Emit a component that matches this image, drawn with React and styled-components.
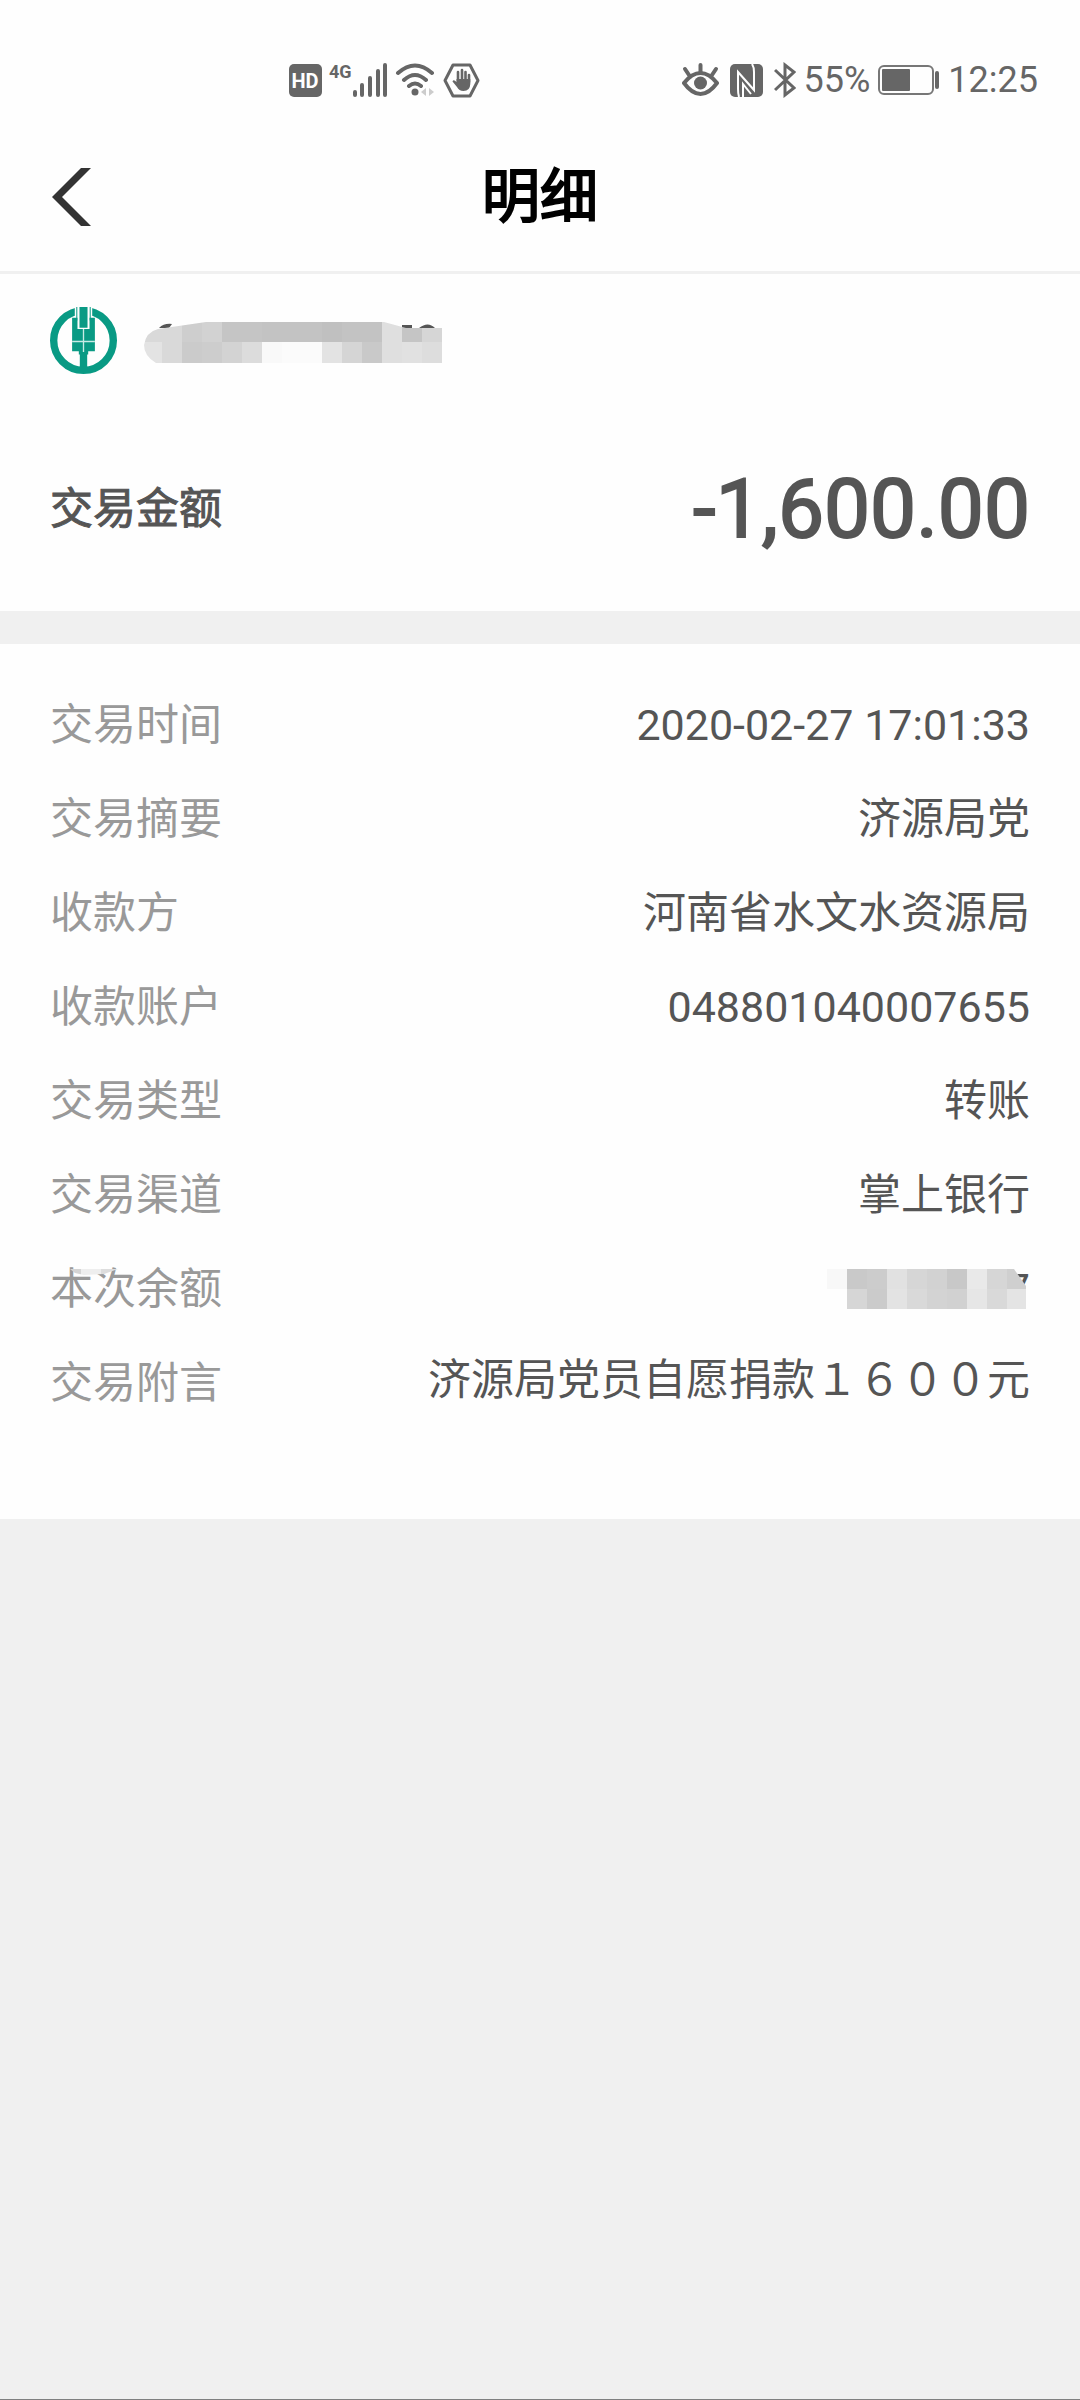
import React from "react";
import styled, { createGlobalStyle } from "styled-components";

const details = [
    { label: "交易时间", value: "2020-02-27 17:01:33" },
    { label: "交易摘要", value: "济源局党" },
    { label: "收款方", value: "河南省水文水资源局" },
    { label: "收款账户", value: "048801040007655" },
    { label: "交易类型", value: "转账" },
    { label: "交易渠道", value: "掌上银行" },
    { label: "本次余额", value: "7", masked: true },
    { label: "交易附言", value: "济源局党员自愿捐款１６００元", memo: true },
];

const accountTop = ["#d9d9d9", "#d9d9d9", "#cecece", "#d2d2d2", "#c5c5c5", "#c5c5c5", "#c3c3c3", "#c3c3c3", "#c3c3c3", "#c0c0c0", "#c3c3c3", "#c3c3c3", "#dfdfdf", "#c5c5c5", "#d6d6d6"];
const accountBottom = ["#e3e3e3", "#d9d9d9", "#cbcbcb", "#cdcdcd", "#d3d3d3", "#dcdcdc", "#f9f9f9", "#fbfbfb", "#fbfbfb", "#e3e3e3", "#d5d5d5", "#c9c9c9", "#dfdfdf", "#e1e1e1", "#dddddd"];

const balanceTop = ["#f8f8f8", "#c9c9c9", "#cccccc", "#e1e1e1", "#d6d6d6", "#d2d2d2", "#c8c8c8", "#e9e9e9", "#d6d6d6", "#cfcfcf"];
const balanceBottom = ["none", "#d6d6d6", "#cbcbcb", "#e3e3e3", "#d9d9d9", "#d3d3d3", "#d1d1d1", "#e6e6e6", "#d9d9d9", "#e4e4e4"];

const Tiles = ({ colors, x, y, height }) => (
    colors.map((color, i) => (
        <rect key={i} x={x + i * 20} y={y} width="20" height={height} fill={color} />
    ))
);

const StatusIcons = () => (
    <>
        <Group $gap="7px">
            <svg width="33" height="33" viewBox="0 0 33 33">
                <rect width="33" height="33" rx="5" fill="#666" />
                <text x="16" y="24" textAnchor="middle" fontSize="20" fontWeight="700" fill="#fff">HD</text>
            </svg>
            <Signal>
                <NetworkType>4G</NetworkType>
                <svg width="36" height="34" viewBox="0 0 36 34" stroke="#666" strokeWidth="4" strokeLinecap="round">
                    <path d="M3 29v3M10 22v10M18 15v17M26 8v24M33 2v30" />
                </svg>
            </Signal>
            <svg width="41" height="34" viewBox="0 0 41 34" fill="none" stroke="#666" strokeWidth="4" strokeLinecap="round">
                <path d="M3 10Q20 -5 37 10M9 17Q20 7 31 17M14 23Q20 18 26 23" />
                <circle cx="20" cy="29" r="3.5" fill="#666" stroke="none" />
                <path d="M31 25v8l-5-4zM34 25v8l5-4z" fill="#ccc" stroke="none" />
            </svg>
            <svg width="37" height="35" viewBox="0 0 37 35" fill="none">
                <path d="M10 2H27L35 17.500L27 33H10L2 17.500Z" stroke="#666" strokeWidth="3" strokeLinejoin="round" />
                <path d="M15 18V9M19 18V7M22.500 18V9M26 19V12" stroke="#666" strokeWidth="2.600" strokeLinecap="round" />
                <path d="M13.500 16H27.300V21Q27 28 20.500 28Q16 28 14 24L9.500 18.500Q10.500 16 13.500 19Z" fill="#666" />
            </svg>
        </Group>
        <Group $gap="8px">
            <Group $gap="11px">
                <svg width="37" height="34" viewBox="0 0 37 34" fill="none" stroke="#666" strokeWidth="4" strokeLinecap="round">
                    <path d="M2 20Q10 10 18.500 10T35 20Q27 31 18.500 31T2 20Z" strokeLinejoin="round" />
                    <path d="M18.500 2V9M3 6L7 12M34 6L30 12" />
                    <circle cx="18.500" cy="20" r="6.500" fill="#666" stroke="none" />
                </svg>
                <svg width="33" height="33" viewBox="0 0 33 33">
                    <rect width="33" height="33" rx="5" fill="#666" />
                    <path d="M9 33Q8 30 8 25V8L24 26V8Q24 3 22 0M13 33V20L21 30" fill="none" stroke="#fff" strokeWidth="2" />
                </svg>
                <svg width="22" height="36" viewBox="0 0 22 36" fill="none" stroke="#666" strokeWidth="3">
                    <path d="M1 8L20 26L11 33V3L20 10L1 28" />
                </svg>
            </Group>
            <StatusText>55%</StatusText>
            <svg width="62" height="30" viewBox="0 0 62 30">
                <rect x="1" y="1" width="54" height="28" rx="5" fill="none" stroke="#777" strokeWidth="2" />
                <rect x="4" y="4" width="28" height="22" rx="1" fill="#666" />
                <rect x="57" y="6" width="4" height="18" rx="2" fill="#666" />
            </svg>
            <StatusText>12:25</StatusText>
        </Group>
    </>
);

const BankLogo = () => (
    <svg width="67" height="67" viewBox="0 0 200 200" role="img" aria-label="中国农业银行">
        <circle cx="100" cy="100" r="89" fill="none" stroke="#099a84" strokeWidth="22" />
        <path d="M74 0H126V40H74Z" fill="#fefefe" />
        <path d="M66 32H82V66H118V32H134V132H114V142H86V132H66Z" fill="#099a84" />
        <path d="M88 0H112V62H88ZM89 140H111V190H89Z" fill="#099a84" />
        <path d="M80 0V40M120 0V40" stroke="#099a84" strokeWidth="3" />
        <path d="M66 103H134M100 66V134" stroke="#c8ebe5" strokeWidth="4" />
    </svg>
);

const AccountMask = () => (
    <svg width="300" height="46" viewBox="0 -4 300 46" role="img" aria-label="账号已隐藏">
        <clipPath id="accountShape">
            <path d="M0 23Q2 10 14 7L62 0H240L262 6H299V41H12Q0 34 0 23Z" />
        </clipPath>
        <path d="M15 6Q20 1 28 2L25 6ZM258 3h10v3h-10zM275 6Q284 -1 291 6Z" fill="#555" />
        <g clipPath="url(#accountShape)" shapeRendering="crispEdges">
            <Tiles colors={accountTop} x={-2} y={0} height={20} />
            <Tiles colors={accountBottom} x={-2} y={20} height={21} />
        </g>
    </svg>
);

const BalanceMask = () => (
    <MaskOverlay width="200" height="40" viewBox="0 0 200 40" role="img" aria-label="余额已隐藏">
        <clipPath id="balanceShape">
            <path d="M0 0H187L199 17V40H0Z" />
        </clipPath>
        <g clipPath="url(#balanceShape)" shapeRendering="crispEdges">
            <Tiles colors={balanceTop} x={0} y={0} height={20} />
            <Tiles colors={balanceBottom} x={0} y={20} height={20} />
        </g>
    </MaskOverlay>
);

const LabelSmudge = () => (
    <SmudgeOverlay width="48" height="6" viewBox="0 0 48 6" aria-hidden="true">
        <clipPath id="smudgeShape">
            <path d="M0 0H48L34 5L14 6L5 4Z" />
        </clipPath>
        <g clipPath="url(#smudgeShape)">
            <Tiles colors={["#d4d4d4", "#eeeeee", "#dddddd"]} x={-9} y={0} height={6} />
        </g>
    </SmudgeOverlay>
);

const App = () => {
    return (
        <>
            <GlobalStyle />
            <Page>
                <StatusBar>
                    <StatusIcons />
                </StatusBar>
                <Header>
                    <BackButton type="button" aria-label="返回">
                        <svg width="44" height="58" viewBox="0 0 44 58">
                            <path d="M31 0H41L12 29L41 58H31L2 29Z" fill="#333" />
                        </svg>
                    </BackButton>
                    <Title>明细</Title>
                </Header>
                <Summary>
                    <Account>
                        <BankLogo />
                        <AccountMask />
                    </Account>
                    <AmountRow>
                        <AmountLabel>交易金额</AmountLabel>
                        <Amount>-1,600.00</Amount>
                    </AmountRow>
                </Summary>
                <Details>
                    {details.map((item) => (
                        <Row key={item.label}>
                            <Label>
                                {item.label}
                                {item.masked && <LabelSmudge />}
                            </Label>
                            <Value $memo={item.memo}>
                                {item.value}
                                {item.masked && <BalanceMask />}
                            </Value>
                        </Row>
                    ))}
                </Details>
            </Page>
        </>
    );
};

export default App;

const GlobalStyle = createGlobalStyle`
    * {
        box-sizing: border-box;
    }

    body {
        margin: 0;
        background: #f0f0f0;
        font-family: Roboto, "Noto Sans CJK SC", sans-serif;
    }

    svg {
        display: block;
        flex-shrink: 0;
    }
`

const Page = styled.main`
    min-height: 100vh;
    border-bottom: 1px solid #808080;
`

const StatusBar = styled.div`
    display: flex;
    justify-content: space-between;
    height: 120px;
    padding: 40px 42px 0 289px;
    background: #fefefe;
    color: #666;
`

const Group = styled.div`
    display: flex;
    align-items: center;
    gap: ${(props) => props.$gap};
    height: 80px;
`

const Signal = styled.div`
    display: flex;
    align-items: flex-start;
`

const NetworkType = styled.span`
    font-size: 18px;
    font-weight: 700;
    line-height: 18px;
`

const StatusText = styled.span`
    font-size: 36px;
    line-height: 40px;
`

const Header = styled.header`
    display: grid;
    grid-template-columns: 1fr auto 1fr;
    align-items: center;
    height: 154px;
    padding: 3px 50px 0;
    border-bottom: 3px solid #f0f0f0;
    background: #fefefe;
`

const BackButton = styled.button`
    justify-self: start;
    padding: 0;
    border: 0;
    background: none;
`

const Title = styled.h1`
    margin: 0;
    font-size: 58px;
    font-weight: 400;
    line-height: 80px;
    color: #000;
    -webkit-text-stroke: 2px #000;
`

const Summary = styled.section`
    height: 337px;
    padding: 33px 50px 0;
    background: #fefefe;
`

const Account = styled.div`
    display: flex;
    align-items: center;
    gap: 27px;
`

const AmountRow = styled.div`
    display: flex;
    align-items: flex-start;
    justify-content: space-between;
    height: 100px;
    margin-top: 85px;
    color: #555;
`

const AmountLabel = styled.span`
    font-size: 43px;
    line-height: 100px;
    -webkit-text-stroke: 1px #555;
`

const Amount = styled.strong`
    font-size: 82px;
    font-weight: 400;
    line-height: 100px;
    -webkit-text-stroke: 2px #555;
`

const Details = styled.dl`
    margin: 33px 0 0;
    padding: 34px 50px 89px;
    background: #fefefe;
`

const Row = styled.div`
    display: flex;
    align-items: flex-start;
    justify-content: space-between;
    min-height: 94px;
    font-size: 43px;
`

const Label = styled.dt`
    position: relative;
    line-height: 94px;
    color: #999;
`

const Value = styled.dd`
    position: relative;
    margin: 0;
    line-height: ${(props) => (props.$memo ? "88px" : "94px")};
    text-align: right;
    color: #555;
`

const MaskOverlay = styled.svg`
    position: absolute;
    top: 27px;
    right: 3px;
`

const SmudgeOverlay = styled.svg`
    position: absolute;
    top: 27px;
    left: 20px;
`
